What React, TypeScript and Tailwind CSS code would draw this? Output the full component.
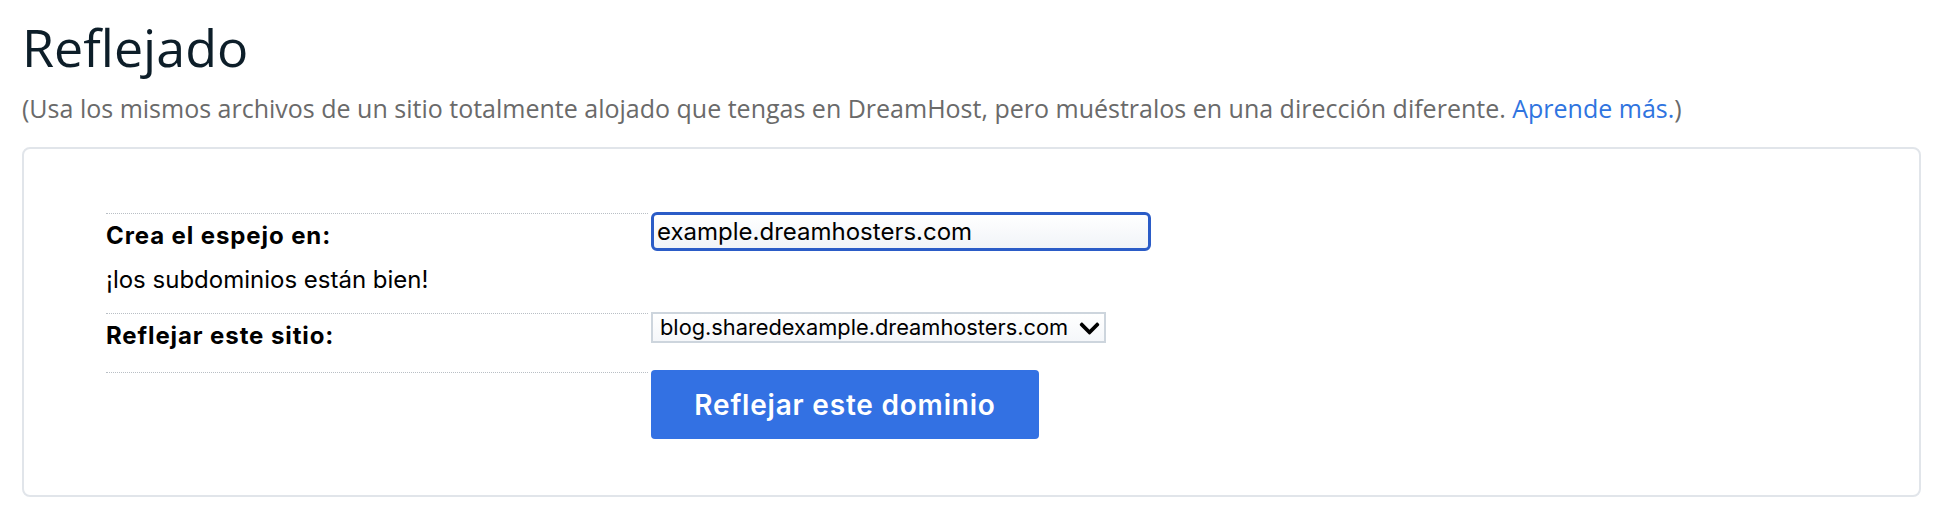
import { useState } from 'react'
import { FaChevronDown } from 'react-icons/fa'

const domains = [
  'blog.sharedexample.dreamhosters.com',
  'sharedexample.dreamhosters.com',
]

export default function App() {
  const [mirrorAt, setMirrorAt] = useState('example.dreamhosters.com')
  const [site, setSite] = useState(domains[0])

  return (
    <div className="min-h-screen bg-white pl-[22px] pr-[29px] pt-[21px]">
      <h1 className="font-['Open_Sans',sans-serif] text-[52px] leading-[52px] text-[#0d1e29]">Reflejado</h1>
      <p className="mt-[23px] font-['Open_Sans',sans-serif] text-[25px] leading-[25px] text-[#6a6a6a]">
        (Usa los mismos archivos de un sitio totalmente alojado que tengas en DreamHost, pero muéstralos en una dirección diferente.{' '}
        <a href="#" className="text-[#2f74e0]">Aprende más.</a>)
      </p>

      <div className="mt-[26px] rounded-[8px] border-2 border-[#e1e5ea] pl-[82px] pt-[64px] pb-[56px] font-['Inter',sans-serif] text-[24px] leading-[26px] text-black">
        <div className="flex h-[100px]">
          <div className="w-[542px] border-t border-dotted border-[#b9bfc5] pt-[9px]">
            <div className="font-bold tracking-[0.9px]">Crea el espejo en:</div>
            <div className="mt-[18px]">¡los subdominios están bien!</div>
          </div>
          <div className="ml-[3px] -mt-[1px]">
            <input
              value={mirrorAt}
              onChange={(e) => setMirrorAt(e.target.value)}
              className="h-[39px] w-[500px] rounded-[6px] border-[3px] border-[#2b5cc7] bg-gradient-to-b from-white to-[#f1f4f8] px-[3px] text-[24px] text-black outline-none"
            />
          </div>
        </div>

        <div className="flex h-[59px]">
          <div className="w-[542px] border-t border-dotted border-[#b9bfc5] pt-[9px] font-bold tracking-[0.9px]">Reflejar este sitio:</div>
          <div className="relative ml-[3px] -mt-[1px]">
            <select
              value={site}
              onChange={(e) => setSite(e.target.value)}
              className="h-[31px] w-[455px] appearance-none border-2 border-[#cdd5dd] bg-gradient-to-b from-white to-[#f5f7fa] pl-[7px] pr-[16px] text-[21.8px] leading-[27px] text-black outline-none"
            >
              {domains.map((d) => (
                <option key={d} value={d}>{d}</option>
              ))}
            </select>
            <FaChevronDown className="pointer-events-none absolute left-[427px] top-[5px] text-[23px] text-black" />
          </div>
        </div>

        <div className="flex">
          <div className="w-[542px] border-t border-dotted border-[#b9bfc5]" />
          <div className="ml-[3px] -mt-[2px]">
            <button className="h-[69px] w-[388px] rounded-[4px] bg-[#3371e3] text-[28px] font-semibold tracking-[0.8px] text-white">
              Reflejar este dominio
            </button>
          </div>
        </div>
      </div>
    </div>
  )
}
